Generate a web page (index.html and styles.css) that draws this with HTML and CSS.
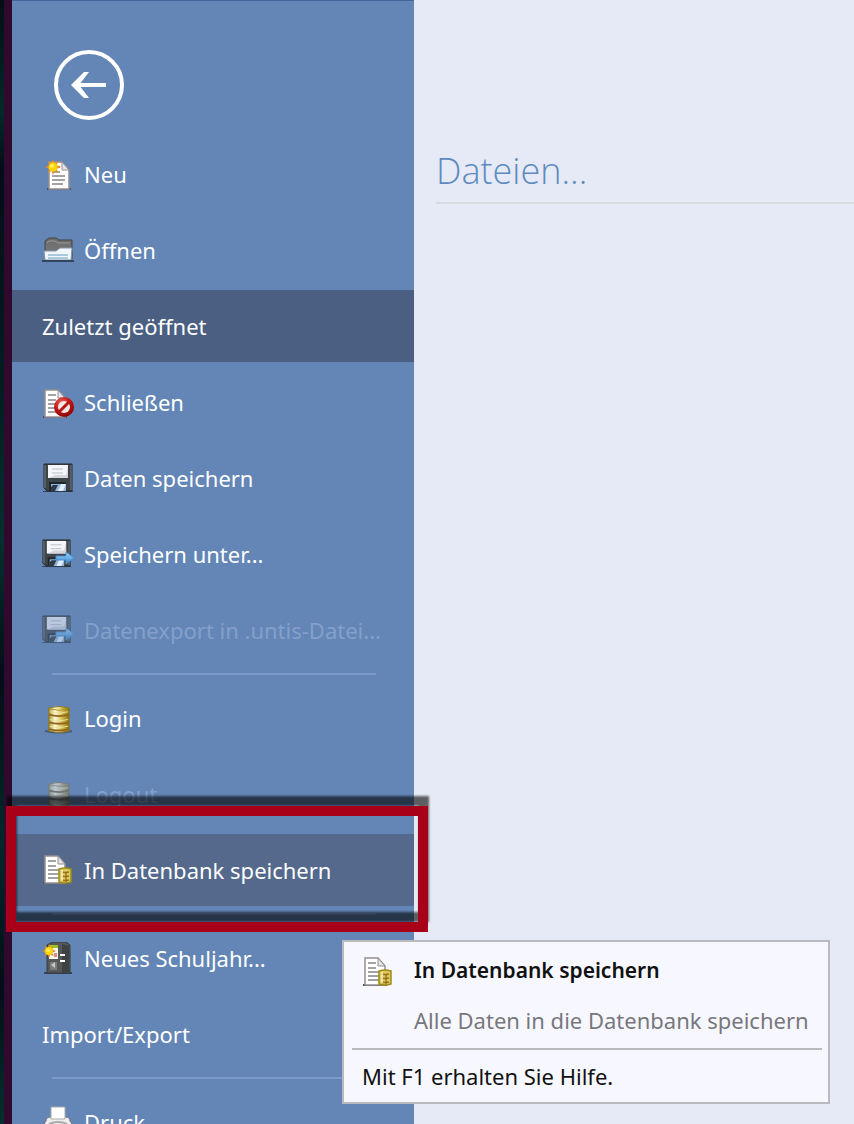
FILE: index.html
```html
<!DOCTYPE html>
<html lang="de">
<head>
<meta charset="utf-8">
<title>Datei</title>
<link rel="stylesheet" href="styles.css">
</head>
<body>
<svg class="defs" aria-hidden="true">
  <defs>
    <linearGradient id="gold" x1="0" x2="1" y1="0" y2="0">
      <stop offset="0" stop-color="#a8921e"/><stop offset=".3" stop-color="#fffbe0"/><stop offset=".6" stop-color="#e0c763"/><stop offset="1" stop-color="#857000"/>
    </linearGradient>
    <linearGradient id="steel" x1="0" x2="0" y1="0" y2="1">
      <stop offset="0" stop-color="#6a6a6a"/><stop offset="1" stop-color="#7d7d7d"/>
    </linearGradient>
    <radialGradient id="red" cx=".4" cy=".3" r=".8">
      <stop offset="0" stop-color="#ee6a60"/><stop offset=".5" stop-color="#c41414"/><stop offset="1" stop-color="#7c0000"/>
    </radialGradient>
    <linearGradient id="arrow" x1="0" x2="0" y1="0" y2="1">
      <stop offset="0" stop-color="#a5dcff"/><stop offset="1" stop-color="#2f7fd0"/>
    </linearGradient>
    <symbol id="sun" viewBox="0 0 16 16">
      <path d="M8 0l1.500 4 4-2-2 4 4.500 2-4.500 2 2 4-4-2L8 16l-1.500-4-4 2 2-4L0 8l4.500-2-2-4 4 2z" fill="#e5892e"/>
      <circle cx="8" cy="8" r="4.500" fill="#ffd500"/><circle cx="7" cy="7" r="2" fill="#fff25a"/>
    </symbol>
    <symbol id="coins" viewBox="0 0 24 28" preserveAspectRatio="none">
      <path d="M1 2q11-3 22 0v24q-11 3-22 0z" fill="url(#gold)" stroke="#8c7a1c"/>
      <path d="M1 9q11 3 22 0M1 17q11 3 22 0M1 24q11 3 22 0" fill="none" stroke="#94651c" stroke-width="2"/>
      <path d="M2 6q10 3 20 0M2 14q10 3 20 0M2 21q10 3 20 0" fill="none" stroke="#efe29a"/>
      <path d="M2 3q10 3 20 0" fill="none" stroke="#a8921e"/>
    </symbol>
    <symbol id="smallcoins" viewBox="0 0 14 17">
      <path d="M1 2q6-2 12 0v13q-6 2-12 0z" fill="#dcc95f" stroke="#a08b17" stroke-width="1.500"/>
      <path d="M3 5q4 1 8 0M3 9q4 1 8 0M3 13q4 1 8 0" fill="none" stroke="#9b7a1a" stroke-width="1.500"/>
      <path d="M4 3v11" stroke="#fff8c8" stroke-width="1.500"/><path d="M8 5v10" stroke="#8a5a12"/>
    </symbol>
    <symbol id="page" viewBox="0 0 24 30">
      <path d="M0 28h24" stroke="#49546b" stroke-width="2"/>
      <path d="M2 1h13l7 8v19H2z" fill="#fff" stroke="#96908f" stroke-width="1.500"/>
      <path d="M15 1v8h7z" fill="#e4e4ec" stroke="#96908f"/>
      <path d="M5 6h8M5 11h8M5 15h13M5 19h13M5 23h11" stroke="#858585" stroke-width="1.500"/>
    </symbol>
    <symbol id="disk" viewBox="0 0 30 30">
      <path d="M0 28.500h30" stroke="#34435e"/>
      <path d="M1 1h28v27H4l-3-3z" fill="#3e4549" stroke="#24282b"/>
      <path d="M2 2v23M28 2v25" stroke="#737f85"/>
      <path d="M5 2h20v13H5z" fill="#f5f5fb"/><path d="M12 12h11l2-9v12H6z" fill="#d4d5df"/>
      <path d="M9 6h11M9 10h11" stroke="#bcbcc9"/>
      <path d="M6 19h17v9H6z" fill="#20272c"/><path d="M8 21h15v7H8z" fill="#90b6df"/>
      <path d="M10 22h5l-3 6H8v-4z" fill="#303a42"/><path d="M18 21h5l-3 7h-5z" fill="#e2eefa"/>
    </symbol>
    <symbol id="icon-export" viewBox="0 0 32 32">
      <use href="#disk" x="0" y="1" width="29" height="29"/>
      <path d="M14 18h10v-4l8 6-8 6v-4H14z" fill="url(#arrow)" stroke="#4a8cc8"/>
    </symbol>
    <symbol id="icon-db" viewBox="0 0 32 32">
      <use href="#page" x="1" y="1" width="24" height="30"/>
      <use href="#smallcoins" x="16" y="13" width="14" height="17"/>
    </symbol>
    <symbol id="icon-coins" viewBox="0 0 32 32">
      <path d="M3 29q13 3 27 0" fill="none" stroke="#4a5b79" stroke-width="2"/>
      <use href="#coins" x="6" y="4" width="22" height="27"/>
    </symbol>
  </defs>
</svg>

<div class="app">
  <nav class="sidebar" aria-label="Datei">
    <button class="back" aria-label="Zurück">
      <svg viewBox="0 0 72 72" class="back-icon"><circle cx="36" cy="36" r="33"/><path d="M53 36H21"/><path class="head" d="M18 36l13-13h5L26 36l10 13h-5z"/></svg>
    </button>
    <ul class="menu">
      <li><button class="item"><svg class="icon" viewBox="0 0 32 32"><use href="#page" x="5" y="3" width="24" height="30"/><use href="#sun" x="3" y="1" width="16" height="16"/></svg>Neu</button></li>
      <li><button class="item"><svg class="icon" viewBox="0 0 32 32"><path d="M3 7l4-3h7l3 2h13v19H3z" fill="url(#steel)" stroke="#454545"/><path d="M5 9l2-2h6l3 2h12" fill="none" stroke="#9a9a9a"/><path d="M2 17h12l4-3h12l-1 12H3z" fill="#f2f7fc" stroke="#8196ad"/><path d="M6 21h20M6 24h20" stroke="#a9c9de" stroke-width="2"/><path d="M0 27h32" stroke="#34435e" stroke-width="2"/></svg>Öffnen</button></li>
      <li><button class="item current">Zuletzt geöffnet</button></li>
      <li><button class="item"><svg class="icon" viewBox="0 0 32 32"><use href="#page" x="1" y="3" width="24" height="30"/><circle cx="22" cy="21" r="10" fill="url(#red)"/><circle cx="22" cy="21" r="6" fill="#f1e7e5"/><path d="M17 26l10-10" stroke="#b51616" stroke-width="3"/></svg>Schließen</button></li>
      <li><button class="item"><svg class="icon" viewBox="0 0 32 32"><use href="#disk" x="1" y="1" width="30" height="30"/></svg>Daten speichern</button></li>
      <li><button class="item"><svg class="icon" viewBox="0 0 32 32"><use href="#icon-export"/></svg>Speichern unter...</button></li>
      <li><button class="item" disabled><svg class="icon" viewBox="0 0 32 32"><use href="#icon-export"/></svg>Datenexport in .untis-Datei...</button></li>
      <li class="separator" role="separator"></li>
      <li><button class="item"><svg class="icon" viewBox="0 0 32 32"><use href="#icon-coins"/></svg>Login</button></li>
      <li><button class="item" disabled><svg class="icon muted" viewBox="0 0 32 32"><use href="#icon-coins"/></svg>Logout</button></li>
      <li class="marked">
        <button class="item hovered" aria-describedby="tip"><svg class="icon" viewBox="0 0 32 32"><use href="#icon-db"/></svg>In Datenbank speichern</button>
        <span class="frame"></span>
        <div class="tooltip" role="tooltip" id="tip">
          <div class="tip-body">
            <svg class="icon" viewBox="0 0 32 32"><use href="#icon-db"/></svg>
            <div class="tip-text"><strong>In Datenbank speichern</strong><span>Alle Daten in die Datenbank speichern</span></div>
          </div>
          <p class="tip-help">Mit F1 erhalten Sie Hilfe.</p>
        </div>
      </li>
      <li class="separator" role="separator"></li>
      <li><button class="item"><svg class="icon" viewBox="0 0 32 32"><path d="M2 31h28" stroke="#34435e" stroke-width="2"/><path d="M5 3l6-3h13l4 3v28H5z" fill="#555856" stroke="#373a39"/><path d="M20 2l7 2v26l-7 1z" fill="#3f4242"/><path d="M7 4h9v13H7z" fill="#f4f4f0"/><path d="M7 3h9v3H7z" fill="#9fc51d"/><path d="M12 11h3v4h-3z" fill="#d88f7c"/><path d="M18 13h5M18 19h5" stroke="#fff" stroke-width="2"/><path d="M8 20h7v8H8z" fill="#7b7e7b"/><path d="M13 20v6l-4-3z" fill="#c8c8c8"/><use href="#sun" x="0" y="2" width="14" height="14"/></svg>Neues Schuljahr...</button></li>
      <li><button class="item">Import/Export</button></li>
      <li class="separator" role="separator"></li>
      <li><button class="item"><svg class="icon" viewBox="0 0 32 32"><path d="M4 15q0-4 5-4h14q5 0 5 4l2 3v10H2V18z" fill="#eee" stroke="#777"/><path d="M9 1h14v12H9z" fill="#fff" stroke="#aaa"/><path d="M7 18q9-4 18 0" fill="none" stroke="#aaa" stroke-width="2"/></svg>Druck</button></li>
    </ul>
  </nav>
  <main class="content">
    <h1 class="title">Dateien...</h1>
  </main>
</div>
</body>
</html>
```

FILE: styles.css
```css
*, *::before { box-sizing: border-box; }

body {
  margin: 0;
  font-family: "Noto Sans", "Open Sans", sans-serif;
  font-size: 22px;
  line-height: 28px;
}

.defs { position: absolute; width: 0; height: 0; }

.app {
  display: flex;
  height: 100vh;
  overflow: hidden;
  background: #e6eaf6;
}

/* Desktop strip and window border on the left edge */
.app::before {
  content: "";
  flex: 0 0 12px;
  border-right: 8px solid #300a2e;
  background: linear-gradient(#030f17, #03282b 10%, #020d18 15%, #031d23 35%, #05302f 48%, #020d18 60%, #04282a 75%, #020d18 88%, #05302f);
}

.sidebar {
  flex: 0 0 402px;
  padding-top: 48px;
  background: #6386b6;
  border-top: 1px solid #41679c;
}

.back {
  display: block;
  width: 72px;
  height: 72px;
  margin: 0 0 17px 41px;
  padding: 0;
  border: 0;
  background: none;
}

.back-icon { display: block; fill: none; stroke: #fff; stroke-width: 4; }
.back-icon .head { fill: #fff; stroke: none; }

.menu {
  display: flex;
  flex-direction: column;
  gap: 4px;
  margin: 0;
  padding: 0;
  list-style: none;
}

.item {
  display: flex;
  align-items: center;
  gap: 10px;
  width: 100%;
  height: 72px;
  padding: 0 30px;
  border: 0;
  background: none;
  color: #fff;
  font: inherit;
  text-align: left;
  white-space: nowrap;
}

.item.current { background: #4a5f82; }
.item.hovered { background: #54698c; }
.item:disabled { color: #84a0cb; }
.item:disabled .icon { opacity: 0.6; }
.item:disabled .muted { filter: saturate(0.4); }

.icon { flex: none; width: 32px; height: 32px; }

.separator {
  height: 8px;
  margin: 0 38px 0 40px;
  padding: 3px 0;
  background: #7c9acb content-box;
}

.marked { position: relative; }

.frame {
  position: absolute;
  inset: -28px -14px -26px -6px;
  border: 10px solid #a90019;
  filter: drop-shadow(1px -10px 1px rgba(0, 0, 0, 0.6));
  pointer-events: none;
}

.tooltip {
  position: absolute;
  top: 106px;
  left: 330px;
  width: 488px;
  padding: 14px 6px 12px 8px;
  border: 2px solid #b9b9be;
  background: #f7f8ff;
  color: #111;
  white-space: nowrap;
}

.tip-body {
  display: flex;
  gap: 20px;
  padding: 0 10px 14px;
  border-bottom: 2px solid #b9b9be;
}

.tip-text { display: flex; flex-direction: column; gap: 22px; }
.tip-text strong { font-size: 21px; font-weight: 600; }
.tip-text span { color: #77777c; }
.tip-help { margin: 12px 10px 0; }

.content { flex: 1; padding: 144px 0 0 22px; }

.title {
  margin: 0;
  padding-bottom: 4px;
  border-bottom: 2px solid #d8dae0;
  color: #5f8ac0;
  font-family: "Open Sans", "Noto Sans", sans-serif;
  font-size: 36px;
  font-weight: 300;
  line-height: 54px;
}
```
